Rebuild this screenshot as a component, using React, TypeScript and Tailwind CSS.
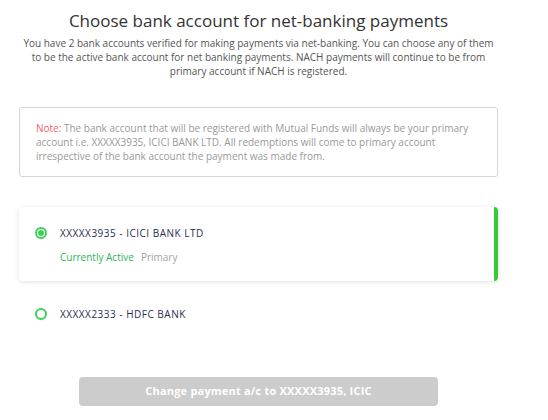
const accounts = [
  { id: "3935", label: "XXXXX3935 - ICICI BANK LTD", active: true, primary: true },
  { id: "2333", label: "XXXXX2333 - HDFC BANK", active: false, primary: false },
];

function Radio({ checked }: { checked: boolean }) {
  return (
    <span className="flex h-[12px] w-[12px] shrink-0 items-center justify-center rounded-full border-[2px] border-[#3ecf5a]">
      {checked && <span className="h-[6px] w-[6px] rounded-full bg-[#3ecf5a]" />}
    </span>
  );
}

export default function App() {
  return (
    <div className="min-h-[420px] bg-white font-['Open_Sans',sans-serif]">
      <div className="ml-[19px] w-[479px] pt-[9px]">
        <h1 className="text-center text-[17px] leading-[24px] text-[#333]">
          Choose bank account for net-banking payments
        </h1>
        <p className="mt-[3px] text-center text-[10px] leading-[14px] text-[#555]">
          You have 2 bank accounts verified for making payments via net-banking. You can choose any of them
          to be the active bank account for net banking payments. NACH payments will continue to be from
          primary account if NACH is registered.
        </p>

        <div className="mt-[29px] rounded-[3px] border border-[#d6d6d6] px-[16px] py-[13px] text-[10px] leading-[14px] text-[#999]">
          <span className="text-[#f0606e]">Note:</span> The bank account that will be registered with Mutual
          Funds will always be your primary account i.e. XXXXX3935, ICICI BANK LTD. All redemptions will come
          to primary account irrespective of the bank account the payment was made from.
        </div>

        <div className="mt-[30px] flex flex-col gap-[26px]">
          {accounts.map((a) =>
            a.active ? (
              <div
                key={a.id}
                className="rounded-[4px] border-r-[4px] border-[#33cc33] bg-white pb-[17px] pl-[16px] pt-[19px] shadow-[0_1px_5px_rgba(0,0,0,0.12)]"
              >
                <div className="flex items-center gap-[13px]">
                  <Radio checked />
                  <span className="text-[10px] leading-[14px] tracking-[0.5px] text-[#2b2d52]">{a.label}</span>
                </div>
                <div className="mt-[10px] flex gap-[7px] pl-[25px] text-[10px] leading-[14px]">
                  <span className="text-[#2fb35e]">Currently Active</span>
                  {a.primary && <span className="text-[#a3a3a3]">Primary</span>}
                </div>
              </div>
            ) : (
              <div key={a.id} className="flex items-center gap-[13px] pl-[16px]">
                <Radio checked={false} />
                <span className="text-[10px] leading-[14px] tracking-[0.5px] text-[#2b2d52]">{a.label}</span>
              </div>
            )
          )}
        </div>

        <div className="mt-[56px] flex justify-center">
          <button
            disabled
            className="h-[29px] w-[359px] rounded-[4px] bg-[#cccccc] text-[11px] font-bold tracking-[0.2px] text-white"
          >
            Change payment a/c to XXXXX3935, ICIC
          </button>
        </div>
      </div>
    </div>
  );
}
